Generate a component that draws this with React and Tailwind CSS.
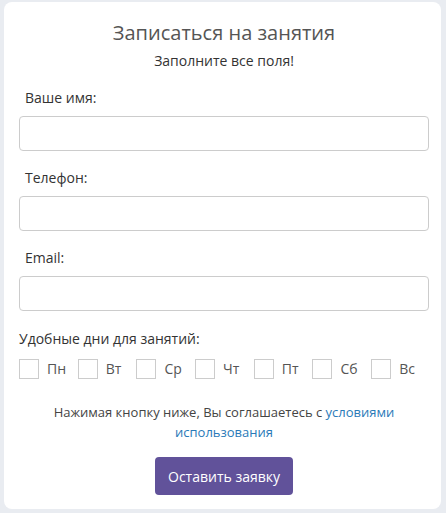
import React from 'react';

const days = ['Пн', 'Вт', 'Ср', 'Чт', 'Пт', 'Сб', 'Вс'];

function Field({ label, type = 'text' }) {
  return (
    <div className="mt-[17px] first:mt-0">
      <label className="block pl-[6px] text-[14px] leading-[20px] text-[#333]">{label}</label>
      <input
        type={type}
        className="mt-[8px] block h-[35px] w-full rounded-[4px] border border-[#ccc] bg-white px-3 outline-none"
      />
    </div>
  );
}

export default function App() {
  return (
    <div
      className="min-h-[513px] bg-[#e9ecf1] pl-[4px] pr-[5px] pt-[2px] pb-[3px]"
      style={{ fontFamily: '"Open Sans", "Noto Sans", sans-serif' }}
    >
      <div className="rounded-[8px] bg-white pl-[15px] pr-[12px] pt-[17px] pb-[14px]">
        <h2 className="text-center text-[20px] leading-[28px] text-[#555]">Записаться на занятия</h2>
        <p className="mt-[4px] text-center text-[14px] leading-[20px] text-[#333]">Заполните все поля!</p>

        <div className="mt-[17px]">
          <Field label="Ваше имя:" />
          <Field label="Телефон:" />
          <Field label="Email:" type="email" />
        </div>

        <p className="mt-[18px] text-[14px] leading-[20px] text-[#333]">Удобные дни для занятий:</p>
        <div className="mt-[10px] flex">
          {days.map((d) => (
            <label key={d} className="flex w-[58.7px] shrink-0 items-center">
              <span className="block h-[20px] w-[20px] border border-[#ccc] bg-white" />
              <span className="ml-[8px] text-[14px] leading-[20px] text-[#555]">{d}</span>
            </label>
          ))}
        </div>

        <div className="mt-[23px] text-center text-[13px] leading-[20px] text-[#444]">
          <p>
            Нажимая кнопку ниже, Вы соглашаетесь с <a className="text-[#2a7ab8]">условиями</a>
          </p>
          <p>
            <a className="text-[#2a7ab8]">использования</a>
          </p>
        </div>

        <div className="mt-[15px] flex justify-center">
          <button className="h-[38px] w-[138px] rounded-[4px] bg-[#61529a] text-[14px] text-white">
            Оставить заявку
          </button>
        </div>
      </div>
    </div>
  );
}
